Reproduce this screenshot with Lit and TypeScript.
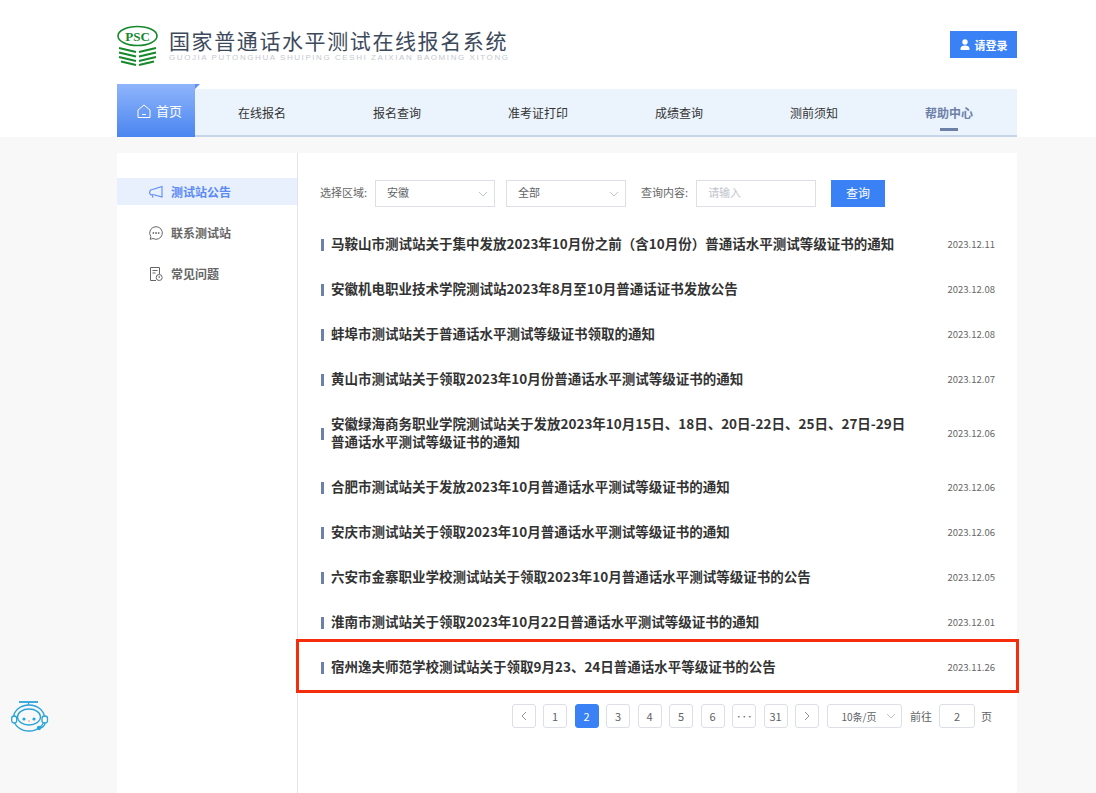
import { LitElement, html, css, svg } from "lit";
import { customElement } from "lit/decorators.js";

const NAV = ["在线报名", "报名查询", "准考证打印", "成绩查询", "测前须知"];

const NOTICES = [
  { title: "马鞍山市测试站关于集中发放2023年10月份之前（含10月份）普通话水平测试等级证书的通知", date: "2023.12.11" },
  { title: "安徽机电职业技术学院测试站2023年8月至10月普通话证书发放公告", date: "2023.12.08" },
  { title: "蚌埠市测试站关于普通话水平测试等级证书领取的通知", date: "2023.12.08" },
  { title: "黄山市测试站关于领取2023年10月份普通话水平测试等级证书的通知", date: "2023.12.07" },
  { title: "安徽绿海商务职业学院测试站关于发放2023年10月15日、18日、20日-22日、25日、27日-29日普通话水平测试等级证书的通知", date: "2023.12.06" },
  { title: "合肥市测试站关于发放2023年10月普通话水平测试等级证书的通知", date: "2023.12.06" },
  { title: "安庆市测试站关于领取2023年10月普通话水平测试等级证书的通知", date: "2023.12.06" },
  { title: "六安市金寨职业学校测试站关于领取2023年10月普通话水平测试等级证书的公告", date: "2023.12.05" },
  { title: "淮南市测试站关于领取2023年10月22日普通话水平测试等级证书的通知", date: "2023.12.01" },
  { title: "宿州逸夫师范学校测试站关于领取9月23、24日普通话水平等级证书的公告", date: "2023.11.26", marked: true },
];

const PAGES = ["1", "2", "3", "4", "5", "6", "•••", "31"];

const chevronDown = svg`<path d="M1 1l4 4 4-4" fill="none" stroke="#c0c4cc" stroke-width="1"/>`;

@customElement("app-root")
export class AppRoot extends LitElement {
  static styles = css`
    :host {
      display: flex;
      flex-direction: column;
      min-height: 100vh;
      background: #f8f8f8;
      font-family: "Noto Sans CJK SC", "Liberation Sans", sans-serif;
      color: #333;
    }
    * {
      box-sizing: border-box;
    }
    header {
      background: #fff;
      height: 137px;
      padding: 0 79px 0 117px;
      display: flex;
      flex-direction: column;
    }
    .top {
      height: 89px;
      display: flex;
      align-items: flex-start;
      justify-content: space-between;
    }
    .brand {
      display: flex;
      padding-top: 25px;
    }
    .logo {
      width: 42px;
      height: 41px;
      display: block;
    }
    .logo text {
      font-family: "Liberation Serif", serif;
      font-weight: 700;
      font-size: 13px;
      fill: #15892b;
    }
    .names {
      margin-left: 10px;
      padding-top: 3px;
      width: 340px;
    }
    .cn {
      font-size: 21px;
      line-height: 25px;
      letter-spacing: 1.6px;
      color: #3d4a5c;
      white-space: nowrap;
    }
    .en {
      font-family: "Liberation Sans", sans-serif;
      font-size: 8px;
      line-height: 9px;
      letter-spacing: 1.57px;
      color: #c6cacf;
      white-space: nowrap;
    }
    .login {
      margin-top: 31px;
      width: 67px;
      height: 27px;
      background: #3a81f5;
      color: #fff;
      font-size: 11px;
      font-weight: 700;
      display: flex;
      align-items: center;
      justify-content: center;
      gap: 5px;
    }
    nav {
      position: relative;
      height: 48px;
      background: #ebf3fd;
      border-bottom: 2px solid #c6d6e8;
      display: flex;
      align-items: center;
      font-size: 12px;
      color: #333;
    }
    .home {
      position: absolute;
      left: 0;
      top: -5px;
      width: 78px;
      height: 53px;
      padding-left: 20px;
      background: linear-gradient(#8fb5fb, #4a85f0);
      color: #fff;
      font-size: 13px;
      display: flex;
      align-items: center;
      gap: 5px;
    }
    .home::after {
      content: "";
      position: absolute;
      left: 100%;
      top: 0;
      border-style: solid;
      border-width: 5px 5px 0 0;
      border-color: #5d92f0 transparent transparent transparent;
    }
    .items {
      display: flex;
      gap: 87px;
      padding-left: 121px;
      height: 100%;
      align-items: center;
    }
    .item {
      position: relative;
      white-space: nowrap;
    }
    .item.active {
      color: #6d80a8;
      font-weight: 700;
    }
    .item.active::after {
      content: "";
      position: absolute;
      left: 15px;
      right: 15px;
      top: 24px;
      height: 3px;
      background: #6d80a8;
    }
    main {
      flex: 1;
      display: flex;
      margin: 16px 79px 0 117px;
      background: #fff;
    }
    aside {
      width: 181px;
      flex: none;
      border-right: 1px solid #e2e4e8;
      padding-top: 25px;
      display: flex;
      flex-direction: column;
      gap: 14px;
    }
    .side {
      height: 27px;
      padding-left: 32px;
      display: flex;
      align-items: center;
      gap: 8px;
      font-size: 12px;
      font-weight: 700;
      color: #666;
    }
    .side.active {
      background: #e8f0fe;
      color: #5b8af5;
    }
    .content {
      flex: 1;
      padding: 27px 22px 0 22px;
      min-width: 0;
    }
    .filters {
      display: flex;
      align-items: center;
      height: 27px;
      font-size: 11px;
      color: #666;
    }
    .box {
      height: 27px;
      border: 1px solid #dcdfe6;
      background: #fff;
      display: flex;
      align-items: center;
      justify-content: space-between;
      font-size: 11px;
      color: #606266;
    }
    .select {
      width: 120px;
      padding: 0 6px 0 11px;
    }
    .label,
    .box span,
    .search span {
      white-space: nowrap;
      padding-bottom: 3px;
    }
    .label-region {
      margin-right: 8px;
    }
    .label-query {
      margin: 0 8px 0 15px;
    }
    .second {
      margin-left: 11px;
    }
    .placeholder {
      color: #c0c4cc;
      font-size: 11px;
    }
    .search {
      margin-left: 15px;
      width: 54px;
      height: 27px;
      background: #3a81f5;
      color: #fff;
      font-size: 12px;
      display: flex;
      align-items: center;
      justify-content: center;
    }
    ul {
      list-style: none;
      margin: 15px 0 0;
      padding: 0;
    }
    li {
      position: relative;
      min-height: 45px;
      padding: 0 0 0 1px;
      display: flex;
      align-items: center;
    }
    li.tall {
      height: 63px;
    }
    li.marked::after {
      content: "";
      position: absolute;
      left: -24px;
      right: -24px;
      top: -6px;
      bottom: -3px;
      border: 3px solid #f42d0c;
      pointer-events: none;
    }
    .bar {
      flex: none;
      width: 3px;
      height: 12px;
      background: #6d80a8;
      margin-right: 7px;
    }
    .title {
      width: 586px;
      font-size: 13.5px;
      font-weight: 700;
      line-height: 18px;
      padding-bottom: 4px;
      color: #333;
    }
    .date {
      margin-left: auto;
      font-size: 9.5px;
      padding-bottom: 2px;
      color: #666;
      white-space: nowrap;
    }
    .pager {
      margin-top: 14px;
      display: flex;
      justify-content: flex-end;
      align-items: center;
      padding-right: 3px;
      gap: 7.5px;
      font-size: 11px;
      color: #606266;
    }
    .page {
      width: 24px;
      height: 24px;
      border: 1px solid #dcdfe6;
      border-radius: 3px;
      display: flex;
      align-items: center;
      justify-content: center;
      background: #fff;
    }
    .page.current {
      background: #3a81f5;
      border-color: #3a81f5;
      color: #fff;
    }
    .page.more {
      font-size: 6px;
      font-weight: 700;
      letter-spacing: -0.5px;
    }
    .size {
      width: 75px;
      height: 24px;
      margin-right: 1px;
      border: 1px solid #dcdfe6;
      border-radius: 3px;
      display: flex;
      align-items: center;
      justify-content: space-between;
      padding: 0 5px 0 14px;
      font-size: 10px;
    }
    .jump {
      display: flex;
      align-items: center;
      gap: 6px;
    }
    .jump span:first-child {
      margin-right: 1px;
    }
    .jump-input {
      width: 36px;
      height: 24px;
      border: 1px solid #dcdfe6;
      border-radius: 3px;
      display: flex;
      align-items: center;
      justify-content: center;
    }
    .robot {
      position: fixed;
      left: 10px;
      top: 700px;
      width: 40px;
      height: 34px;
    }
  `;

  render() {
    return html`
      <header>
        <div class="top">
          <div class="brand">
            <svg class="logo" viewBox="0 0 42 41">
              <ellipse cx="20.5" cy="11" rx="19.5" ry="9.5" fill="none" stroke="#15892b" stroke-width="1.6" />
              <text x="20.5" y="15.500" text-anchor="middle">PSC</text>
              <g fill="none" stroke="#15892b" stroke-width="2">
                <path d="M2 23l17 4M2 27.500l17 4M2 32l17 4M4 36.500l15 3.500" />
                <path d="M39 23l-17 4M39 27.500l-17 4M39 32l-17 4M37 36.500l-15 3.500" />
              </g>
            </svg>
            <div class="names">
              <div class="cn">国家普通话水平测试在线报名系统</div>
              <div class="en">GUOJIA PUTONGHUA SHUIPING CESHI ZAIXIAN BAOMING XITONG</div>
            </div>
          </div>
          <div class="login">
            <svg width="10" height="11" viewBox="0 0 10 11">
              <circle cx="5" cy="3" r="2.700" fill="#fff" />
              <path d="M.6 11V9.300C.6 7.500 2.500 6.500 5 6.500s4.400 1 4.400 2.800V11z" fill="#fff" />
            </svg>
            请登录
          </div>
        </div>
        <nav>
          <div class="home">
            <svg width="14" height="14" viewBox="0 0 14 14" fill="none" stroke="#fff" stroke-width="1">
              <path d="M1 6l6-5 6 5v7.500H1z" />
              <path d="M5 10.500h4" />
            </svg>
            首页
          </div>
          <div class="items">
            ${NAV.map((n) => html`<div class="item">${n}</div>`)}
            <div class="item active">帮助中心</div>
          </div>
        </nav>
      </header>
      <main>
        <aside>
          <div class="side active">
            <svg width="14" height="14" viewBox="0 0 14 14" fill="none" stroke="#5b8af5" stroke-width="1.100">
              <path d="M13 1.500v10.500L5 9.800H1.500l-1-2.300 1-2.500 2-.5z" />
              <path d="M3 10l1 2.500" />
            </svg>
            测试站公告
          </div>
          <div class="side">
            <svg width="14" height="14" viewBox="0 0 14 14" fill="none" stroke="#666" stroke-width="1">
              <path d="M7 .7a6.300 6.300 0 1 1-3 11.800L1.200 13.300l.6-2.700A6.300 6.300 0 0 1 7 .7z" />
              <circle cx="4.300" cy="7" r=".5" fill="#666" />
              <circle cx="7" cy="7" r=".5" fill="#666" />
              <circle cx="9.700" cy="7" r=".5" fill="#666" />
            </svg>
            联系测试站
          </div>
          <div class="side">
            <svg width="14" height="14" viewBox="0 0 14 14" fill="none" stroke="#666" stroke-width="1">
              <path d="M7 13.500H1.500V.5h9v6.500" />
              <path d="M3.500 3.500h5M3.500 6h3" />
              <circle cx="10.200" cy="10.500" r="3" />
              <path d="M10.200 9v2" />
            </svg>
            常见问题
          </div>
        </aside>
        <section class="content">
          <div class="filters">
            <span class="label label-region">选择区域:</span>
            <div class="box select">
              <span>安徽</span>
              <svg width="10" height="6" viewBox="0 0 10 6">${chevronDown}</svg>
            </div>
            <div class="box select second">
              <span>全部</span>
              <svg width="10" height="6" viewBox="0 0 10 6">${chevronDown}</svg>
            </div>
            <span class="label label-query">查询内容:</span>
            <div class="box select"><span class="placeholder">请输入</span></div>
            <div class="search"><span>查询</span></div>
          </div>
          <ul>
            ${NOTICES.map(
              (n, i) => html`
                <li class="${i === 4 ? "tall" : ""} ${n.marked ? "marked" : ""}">
                  <span class="bar"></span>
                  <span class="title">${n.title}</span>
                  <span class="date">${n.date}</span>
                </li>
              `
            )}
          </ul>
          <div class="pager">
            <div class="page">
              <svg width="6" height="10" viewBox="0 0 6 10" fill="none" stroke="#909399"><path d="M5 1L1 5l4 4" /></svg>
            </div>
            ${PAGES.map(
              (p) => html`<div class="page ${p === "2" ? "current" : ""} ${p === "•••" ? "more" : ""}">${p}</div>`
            )}
            <div class="page">
              <svg width="6" height="10" viewBox="0 0 6 10" fill="none" stroke="#909399"><path d="M1 1l4 4-4 4" /></svg>
            </div>
            <div class="size">
              <span>10条/页</span>
              <svg width="10" height="6" viewBox="0 0 10 6">${chevronDown}</svg>
            </div>
            <div class="jump">
              <span>前往</span>
              <div class="jump-input">2</div>
              <span>页</span>
            </div>
          </div>
        </section>
      </main>
      <svg class="robot" viewBox="0 0 40 34" fill="none" stroke="#2aa3d8" stroke-width="1.300">
        <path d="M9 2h19" stroke-width="1.800" />
        <path d="M18.500 2v3" />
        <ellipse cx="19" cy="18" rx="15.500" ry="13" />
        <ellipse cx="19" cy="17" rx="11.500" ry="8" />
        <rect x="1.700" y="16" width="5" height="7" rx="2.500" fill="#fff" />
        <rect x="32" y="16" width="5.500" height="7" rx="2.500" fill="#fff" />
        <path d="M35 23c0 3-3 5-6 5" />
        <circle cx="29" cy="28" r="1.500" fill="#2aa3d8" />
        <circle cx="14" cy="19" r="1.600" fill="#2aa3d8" stroke="none" />
        <circle cx="24" cy="19" r="1.600" fill="#2aa3d8" stroke="none" />
        <circle cx="19" cy="21" r=".8" fill="#f08a8a" stroke="none" />
      </svg>
    `;
  }
}
